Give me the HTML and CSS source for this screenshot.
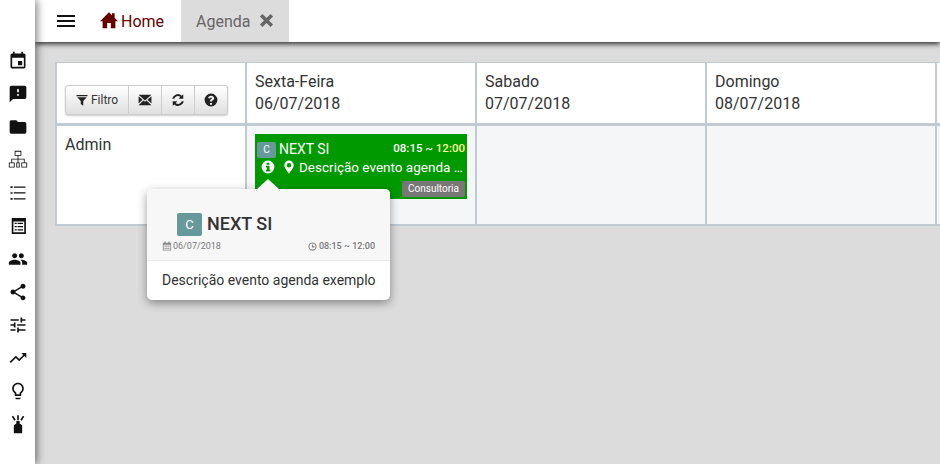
FILE: index.html
```html
<!DOCTYPE html>
<html lang="en">
<head>
    <meta charset="UTF-8">
    <title>Agenda</title>
    <link rel="stylesheet" href="styles.css">
</head>
<body>

    <div class="app">
        <nav class="sidebar">
            <svg class="side-icon" viewBox="0 0 24 24"><path d="M17 12h-5v5h5v-5zM16 1v2H8V1H6v2H5c-1.11 0-1.99.9-1.99 2L3 19c0 1.1.89 2 2 2h14c1.1 0 2-.9 2-2V5c0-1.1-.9-2-2-2h-1V1h-2zm3 18H5V8h14v11z"/></svg>
            <svg class="side-icon" viewBox="0 0 24 24"><path d="M20 2H4c-1.1 0-1.99.9-1.99 2L2 22l4-4h14c1.1 0 2-.9 2-2V4c0-1.1-.9-2-2-2zm-7 12h-2v-2h2v2zm0-4h-2V6h2v4z"/></svg>
            <svg class="side-icon" viewBox="0 0 24 24"><path d="M10 4H4c-1.1 0-1.99.9-1.99 2L2 18c0 1.1.9 2 2 2h16c1.1 0 2-.9 2-2V8c0-1.1-.9-2-2-2h-8l-2-2z"/></svg>
            <svg class="side-icon" viewBox="0 0 24 24"><path fill-rule="evenodd" d="M8 1h8v6h-3.500v3.500H20V15h3v6h-7v-6h3v-3.500h-6.500V15H14v6h-4v-6h1.500v-3.500H5V15h3v6H1v-6h3v-4.500h7.500V7H8V1zm1 1v4h6V2H9zM2 16v4h5v-4H2zm9 0v4h2v-4h-2zm6 0v4h5v-4h-5z"/></svg>
            <svg class="side-icon" viewBox="0 0 24 24"><path d="M3 4h2.500v2H3zM7 4.200h14v1.500H7zM3 11h2.500v2H3zM7 11.200h14v1.500H7zM3 18h2.500v2H3zM7 18.200h14v1.500H7z"/></svg>
            <svg class="side-icon" viewBox="0 0 24 24"><path fill-rule="evenodd" d="M4.500 2.500h17v19h-17zM6.500 6.500v13h13v-13zM8 8h2.500v1.500H8zM11.500 8H18v1.500h-6.500zM8 12h2.500v1.500H8zM11.500 12H18v1.500h-6.500zM8 16h2.500v1.500H8zM11.500 16H18v1.500h-6.500z"/></svg>
            <svg class="side-icon" viewBox="0 0 24 24"><path d="M16 11c1.660 0 2.990-1.340 2.990-3S17.660 5 16 5c-1.660 0-3 1.340-3 3s1.340 3 3 3zm-8 0c1.660 0 2.990-1.340 2.990-3S9.660 5 8 5C6.340 5 5 6.340 5 8s1.340 3 3 3zm0 2c-2.330 0-7 1.170-7 3.500V19h14v-2.500c0-2.330-4.670-3.500-7-3.500zm8 0c-.29 0-.62.02-.97.05 1.160.84 1.970 1.970 1.970 3.450V19h6v-2.500c0-2.330-4.670-3.500-7-3.500z"/></svg>
            <svg class="side-icon" viewBox="0 0 24 24"><path d="M18 16.080c-.76 0-1.440.3-1.960.77L8.910 12.700c.05-.23.09-.46.09-.7s-.04-.47-.09-.7l7.050-4.110c.54.5 1.250.81 2.040.81 1.660 0 3-1.340 3-3s-1.340-3-3-3-3 1.340-3 3c0 .24.04.47.09.7L8.040 9.810C7.500 9.310 6.790 9 6 9c-1.660 0-3 1.340-3 3s1.340 3 3 3c.79 0 1.500-.31 2.040-.81l7.120 4.160c-.05.21-.08.43-.08.65 0 1.610 1.310 2.920 2.920 2.920 1.610 0 2.920-1.310 2.920-2.920s-1.310-2.920-2.920-2.920z"/></svg>
            <svg class="side-icon" viewBox="0 0 24 24"><path d="M3 17v2h6v-2H3zM3 5v2h10V5H3zm10 16v-2h8v-2h-8v-2h-2v6h2zM7 9v2H3v2h4v2h2V9H7zm14 4v-2H11v2h10zm-6-4h2V7h4V5h-4V3h-2v6z"/></svg>
            <svg class="side-icon" viewBox="0 0 24 24"><path d="M16 6l2.290 2.290-4.880 4.880-4-4L2 16.590 3.410 18l6-6 4 4 6.300-6.290L22 12V6z"/></svg>
            <svg class="side-icon" viewBox="0 0 24 24"><path d="M9 21c0 .55.45 1 1 1h4c.55 0 1-.45 1-1v-1H9v1zm3-19C8.140 2 5 5.140 5 9c0 2.380 1.190 4.470 3 5.740V17c0 .55.45 1 1 1h6c.55 0 1-.45 1-1v-2.260c1.810-1.270 3-3.360 3-5.740 0-3.860-3.140-7-7-7zm2.850 11.100l-.85.6V16h-4v-2.300l-.85-.6C7.800 12.160 7 10.630 7 9c0-2.760 2.240-5 5-5s5 2.240 5 5c0 1.630-.8 3.160-2.150 4.100z"/></svg>
            <svg class="side-icon" viewBox="0 0 24 24"><path d="M10 8.500h4v3l3 2V23H7v-9.500l3-2zM11 1.500h2v6h-2zM4.500 3l1.700-1 3 5-1.700 1zM19.500 3l-1.700-1-3 5 1.700 1z"/></svg>
        </nav>

        <div class="main">
            <header class="topbar">
                <svg class="menu-icon" viewBox="0 0 24 24"><path d="M3 18h18v-2H3v2zm0-5h18v-2H3v2zm0-7v2h18V6H3z"/></svg>
                <a class="tab tab-home">
                    <svg class="home-icon" viewBox="0 0 24 24"><path d="M12 1.500L0 13.500h3.500V23h6v-7h5v7h6v-9.500H24l-4.500-4.500V3h-3.500v2.500z"/></svg>
                    Home
                </a>
                <a class="tab tab-active">
                    Agenda
                    <svg class="close-icon" viewBox="0 0 24 24"><path d="M5.500 1.500L12 8l6.500-6.500 4 4L16 12l6.500 6.500-4 4L12 16l-6.500 6.500-4-4L8 12 1.500 5.500z"/></svg>
                </a>
            </header>

            <div class="content">
                <div class="schedule">
                    <div class="cell tools-cell">
                        <div class="btn-group">
                            <button class="btn">
                                <svg class="btn-icon" viewBox="0 0 24 24"><path d="M1 2h22v2.500H1zM2.500 6.500h19L14.500 14v9.500l-5-3.500v-6z"/></svg>
                                Filtro
                            </button>
                            <button class="btn">
                                <svg class="btn-icon btn-icon-big" viewBox="0 0 24 24"><path d="M1 3h22L12 13zM1 5.500l6.800 6L1 18zM23 5.500V18l-6.800-6.500zM9.300 12.800L12 15.200l2.700-2.400L23 21H1z"/></svg>
                            </button>
                            <button class="btn">
                                <svg class="btn-icon btn-icon-big" viewBox="0 0 24 24"><path d="M21 2v8h-8l3-3a6.500 6.500 0 0 0-10.500 3H2a10 10 0 0 1 16.500-5.500zM3 22v-8h8l-3 3a6.500 6.500 0 0 0 10.500-3H22a10 10 0 0 1-16.500 5.500z"/></svg>
                            </button>
                            <button class="btn">
                                <svg class="btn-icon btn-icon-big" viewBox="0 0 24 24"><path fill-rule="evenodd" d="M12 1a11 11 0 1 0 0 22 11 11 0 0 0 0-22zm-1.800 16h3.600v3.200h-3.600zM12 4.500c3 0 5.300 1.700 5.300 4.400 0 2-1.200 2.900-2.300 3.600-.8.500-1.200.9-1.200 2.200h-3.600c0-2.400.8-3.500 2.200-4.400.9-.6 1.300-.9 1.300-1.500 0-.7-.6-1.100-1.500-1.100-1 0-1.700.6-1.900 1.700l-3.400-.7C7.400 6 9.300 4.500 12 4.500z"/></svg>
                            </button>
                        </div>
                    </div>
                    <div class="cell day-cell">Sexta-Feira<br>06/07/2018</div>
                    <div class="cell day-cell">Sabado<br>07/07/2018</div>
                    <div class="cell day-cell">Domingo<br>08/07/2018</div>
                    <div class="cell"></div>

                    <div class="cell user-cell">Admin</div>
                    <div class="cell slot">
                        <div class="event">
                            <div class="event-top">
                                <span class="badge">C</span>
                                <span class="event-name">NEXT SI</span>
                                <span class="event-time">08:15 ~ <span class="time-end">12:00</span></span>
                            </div>
                            <div class="event-desc">
                                <svg class="info-icon" viewBox="0 0 24 24"><path fill-rule="evenodd" d="M12 1a11 11 0 1 0 0 22 11 11 0 0 0 0-22zM9.500 4.500h5v3.500h-5zM8.500 10h6v6.500h1.500v3H8.500v-3H10v-3.500H8.500z"/></svg>
                                <svg class="pin-icon" viewBox="3 0 18 24"><path fill-rule="evenodd" d="M12 .5a8.500 8.500 0 0 0-8.500 8.500c0 4 5 10.500 8.500 15 3.500-4.500 8.500-11 8.500-15A8.500 8.500 0 0 0 12 .5zm0 4.500a4 4 0 1 1 0 8 4 4 0 0 1 0-8z"/></svg>
                                <span class="desc-text">Descrição evento agenda …</span>
                            </div>
                            <div class="event-tag"><span class="tag">Consultoria</span></div>
                        </div>
                    </div>
                    <div class="cell slot"></div>
                    <div class="cell slot"></div>
                    <div class="cell slot"></div>
                </div>

                <div class="popover">
                    <div class="popover-head">
                        <div class="popover-title"><span class="badge badge-big">C</span><span class="popover-name">NEXT SI</span></div>
                        <div class="popover-meta">
                            <span class="meta-item">
                                <svg class="meta-icon" viewBox="0 0 24 24"><path fill-rule="evenodd" d="M6 1h3v3h6V1h3v3h4v19H2V4h4zM4 9v12h16V9zm2 2h3v3H6zm4.500 0h3v3h-3zm4.500 0h3v3h-3zM6 16h3v3H6zm4.500 0h3v3h-3zm4.500 0h3v3h-3z"/></svg>
                                06/07/2018
                            </span>
                            <span class="meta-item meta-time">
                                <svg class="meta-icon" viewBox="0 0 24 24"><path fill-rule="evenodd" d="M12 1a11 11 0 1 0 0 22 11 11 0 0 0 0-22zm0 3a8 8 0 1 1 0 16 8 8 0 0 1 0-16zm-1.500 2.500h3v5h4v3h-7z"/></svg>
                                08:15 ~ 12:00
                            </span>
                        </div>
                    </div>
                    <div class="popover-body">Descrição evento agenda exemplo</div>
                </div>
            </div>
        </div>
    </div>

</body>
</html>
```

FILE: styles.css
```css
html, body {
    height: 100%;
}
body {
    margin: 0;
    overflow: hidden;
    font-family: Roboto, Arial, sans-serif;
    font-size: 16px;
    color: #333;
    background-color: #dcdcdc;
}
.app {
    display: flex;
    height: 100%;
}

/* left icon bar */
.sidebar {
    position: relative;
    z-index: 3;
    flex: 0 0 35px;
    display: flex;
    flex-direction: column;
    align-items: center;
    padding-top: 51px;
    box-sizing: border-box;
    background-color: #fff;
    box-shadow: 2px 0 8px rgba(0, 0, 0, 0.5);
}
.side-icon {
    flex: 0 0 20px;
    width: 20px;
    height: 20px;
    margin-bottom: 13px;
    fill: #111;
}

.main {
    flex: 1;
    min-width: 0;
    display: flex;
    flex-direction: column;
}

/* top tabs */
.topbar {
    position: relative;
    z-index: 2;
    flex: 0 0 42px;
    display: flex;
    align-items: stretch;
    background-color: #fff;
    box-shadow: 0 2px 5px rgba(0, 0, 0, 0.8);
}
.menu-icon {
    width: 24px;
    height: 24px;
    margin: 9px 0 0 19px;
    fill: #111;
}
.tab {
    display: flex;
    align-items: center;
    padding: 0 15px;
}
.tab-home {
    margin-left: 8px;
    padding-right: 17px;
    padding-left: 14px;
    color: #660000;
}
.home-icon {
    width: 18px;
    height: 18px;
    margin: 0 3px 2px 0;
    fill: #660000;
}
.tab-active {
    color: #666;
    background-color: #dcdcdc;
}
.close-icon {
    width: 15px;
    height: 15px;
    margin: 0 0 2px 8px;
    fill: #666;
}

/* schedule grid */
.content {
    position: relative;
    flex: 1;
    padding: 20px 0 0 20px;
}
.schedule {
    display: grid;
    grid-template-columns: 188px repeat(4, 228px);
    grid-template-rows: 60px 98px;
    gap: 3px 2px;
    width: max-content;
    padding: 1px 2px 2px;
    background-color: #c0cad3;
}
.cell {
    background-color: #fff;
}
.day-cell {
    padding: 8px;
    line-height: 22px;
}
.user-cell {
    padding: 9px 8px;
}
.tools-cell {
    padding: 22px 8px 0;
}
.slot {
    padding: 8px;
    background-color: #f4f6f8;
}

.btn-group {
    display: flex;
    width: max-content;
    border-radius: 3px;
    box-shadow: 0 1px 2px rgba(0, 0, 0, 0.2);
}
.btn {
    display: flex;
    align-items: center;
    justify-content: center;
    gap: 3px;
    width: 33px;
    height: 30px;
    padding: 0;
    border: 1px solid #ccc;
    border-left: none;
    background: linear-gradient(to bottom, #fff, #e0e0e0);
    font-family: inherit;
    font-size: 12px;
    color: #333;
}
.btn:first-child {
    width: 64px;
    border-left: 1px solid #ccc;
    border-radius: 3px 0 0 3px;
}
.btn:last-child {
    border-radius: 0 3px 3px 0;
}
.btn-icon {
    width: 12px;
    height: 12px;
    fill: #222;
}
.btn-icon-big {
    width: 14px;
    height: 14px;
}

/* event card */
.event {
    height: 65px;
    padding: 5px 2px 0;
    box-sizing: border-box;
    background-color: #009900;
    color: #fff;
    font-size: 14px;
}
.event-top {
    display: flex;
    align-items: center;
    height: 19px;
}
.badge {
    display: inline-block;
    width: 19px;
    height: 16px;
    margin: 3px 3px 0 0;
    border-radius: 2px;
    background-color: #669999;
    font-size: 10px;
    line-height: 16px;
    text-align: center;
}
.event-time {
    margin: 0 0 2px auto;
    font-size: 11.500px;
    font-weight: 500;
}
.time-end {
    color: #ffff99;
}
.event-desc {
    display: flex;
    align-items: center;
    height: 18px;
}
.info-icon {
    flex: none;
    width: 14px;
    height: 14px;
    margin-left: 4px;
    fill: #fff;
}
.pin-icon {
    flex: none;
    width: 10px;
    height: 14px;
    margin: 0 5px 0 9px;
    fill: #fff;
}
.desc-text {
    font-size: 13.500px;
    white-space: nowrap;
}
.event-tag {
    display: flex;
    justify-content: flex-end;
    margin-top: 5px;
}
.tag {
    height: 16px;
    padding: 0 6px;
    border-radius: 2px;
    background-color: #777;
    font-size: 10px;
    line-height: 15px;
}

/* popover over the event */
.popover {
    position: absolute;
    left: 112px;
    top: 147px;
    width: 243px;
    height: 111px;
    border-radius: 5px;
    background-color: #fff;
    box-shadow: 0 3px 10px rgba(0, 0, 0, 0.4);
}
.popover::before {
    content: "";
    position: absolute;
    left: 110px;
    top: -10px;
    border-left: 11px solid transparent;
    border-right: 11px solid transparent;
    border-bottom: 10px solid #f7f7f7;
}
.popover-head {
    height: 72px;
    padding: 0 15px;
    box-sizing: border-box;
    border-bottom: 1px solid #ebebeb;
    border-radius: 5px 5px 0 0;
    background-color: #f7f7f7;
}
.popover-title {
    display: flex;
    align-items: center;
    padding: 24px 0 0 15px;
    font-size: 18px;
    font-weight: 500;
    line-height: 21px;
}
.popover-name {
    margin-bottom: 2px;
}
.badge-big {
    width: 25px;
    height: 23px;
    margin: 0 5px 0 0;
    font-size: 13px;
    font-weight: 400;
    line-height: 23px;
    color: #fff;
}
.popover-meta {
    display: flex;
    justify-content: space-between;
    margin-top: 4px;
    font-size: 9px;
    line-height: 12px;
    color: #777;
}
.meta-item {
    display: flex;
    align-items: center;
    gap: 1px;
}
.meta-time {
    gap: 2px;
    font-weight: 500;
}
.meta-icon {
    width: 10px;
    height: 10px;
    fill: #888;
}
.meta-time .meta-icon {
    width: 9px;
    height: 9px;
}
.popover-body {
    padding: 11px 15px;
    font-size: 14px;
    line-height: 17px;
    white-space: nowrap;
}
```
